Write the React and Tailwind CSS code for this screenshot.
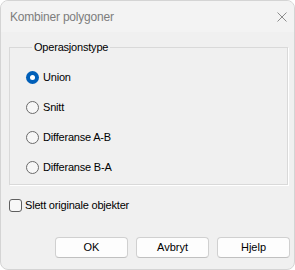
import { useState } from 'react';

const options = ['Union', 'Snitt', 'Differanse A-B', 'Differanse B-A'];

const Radio = ({ checked }) =>
  checked ? (
    <span className="flex h-[13px] w-[13px] shrink-0 items-center justify-center rounded-full bg-[#005fb8]">
      <span className="h-[5px] w-[5px] rounded-full bg-white" />
    </span>
  ) : (
    <span className="h-[13px] w-[13px] shrink-0 rounded-full border border-[#6b6b6b] bg-[#f7f7f7]" />
  );

const Button = ({ children }) => (
  <button className="h-[21px] w-[73px] rounded-[4px] border border-[#d0d0d0] border-b-[#c0c0c0] bg-[#fdfdfd] text-[11px] leading-none text-black">
    {children}
  </button>
);

export default function App() {
  const [selected, setSelected] = useState(0);

  return (
    <div
      className="flex h-[270px] w-[295px] flex-col overflow-hidden rounded-lg border border-[#d4d4d4] bg-[#f0f0f0] text-[11px] text-black"
      style={{ fontFamily: '"Liberation Sans", Arial, sans-serif' }}
    >
      <div className="flex h-[31px] shrink-0 items-center justify-between bg-[#f3f3f3] pl-[9px] pr-[7px]">
        <span className="text-[12px] tracking-[-0.2px] text-[#7d7d7d]">Kombiner polygoner</span>
        <svg width="10" height="10" viewBox="0 0 10 10" className="mr-[0px]">
          <path d="M0.5 0.5 L9.5 9.5 M9.5 0.5 L0.5 9.5" stroke="#8c8c8c" strokeWidth="1" />
        </svg>
      </div>

      <fieldset className="ml-[8px] mt-[8px] w-[279px] border border-[#d9d9d9] px-[16px] pb-[2px] pt-[8px] shadow-[1px_1px_0_#ffffff]">
        <legend className="ml-[6px] px-[2px] text-[11px] leading-[14px] tracking-[-0.2px]">Operasjonstype</legend>
        {options.map((label, i) => (
          <div
            key={label}
            className="flex h-[30px] cursor-default items-center gap-[4px]"
            onClick={() => setSelected(i)}
          >
            <Radio checked={selected === i} />
            <span className="tracking-[-0.2px]">{label}</span>
          </div>
        ))}
      </fieldset>

      <label className="ml-[8px] mt-[12px] flex h-[16px] items-center gap-[3px]">
        <span className="h-[13px] w-[13px] rounded-[3px] border border-[#5f5f5f] bg-[#f7f7f7]" />
        <span className="tracking-[-0.2px]">Slett originale objekter</span>
      </label>

      <div className="mt-[24px] flex justify-end gap-[8px] pr-[4px]">
        <Button>OK</Button>
        <Button>Avbryt</Button>
        <Button>Hjelp</Button>
      </div>
    </div>
  );
}
